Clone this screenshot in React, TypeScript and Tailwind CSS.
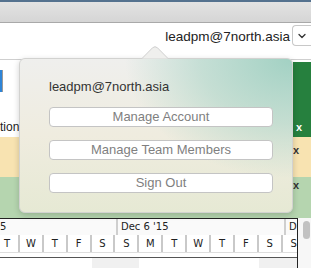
import React from 'react';

const days = ['T', 'W', 'T', 'F', 'S', 'S', 'M', 'T', 'W', 'T', 'F', 'S', 'S'];
// weekend columns get a light shading in the body rows
const weekend = [4, 5, 11, 12];

function Chevron() {
  return (
    <svg width="8" height="6" viewBox="0 0 8 6" fill="none">
      <path d="M1 1.5 L4 4.5 L7 1.5" stroke="#333" strokeWidth="1.3" strokeLinecap="round" strokeLinejoin="round" />
    </svg>
  );
}

function AccountPopover() {
  return (
    <div className="absolute left-[19px] top-[58px] w-[274px] h-[155px]">
      {/* arrow */}
      <svg className="absolute left-[123px] top-[-12px]" width="26" height="13" viewBox="0 0 26 13">
        <path d="M0 12.5 L10.5 1.8 Q13 -0.4 15.5 1.8 L26 12.5" fill="#efefed" stroke="#cfcfcf" strokeWidth="1" />
      </svg>
      <div className="h-full rounded-[6px] border border-[#d2d2d0] shadow-[0_2px_6px_rgba(0,0,0,0.18)] bg-[radial-gradient(ellipse_75%_95%_at_100%_0%,#a2d1c3_0%,rgba(170,212,198,0.6)_45%,rgba(200,225,210,0)_82%),linear-gradient(180deg,#efefed_0%,#efecdf_50%,#e6e9d4_100%)] pt-[20px] pl-[29px] pr-[19px] font-['Liberation_Sans',Arial,sans-serif]">
        <div className="text-[13px] leading-[16px] text-[#333]">leadpm@7north.asia</div>
        <div className="mt-[12px] flex flex-col gap-[13px]">
          {['Manage Account', 'Manage Team Members', 'Sign Out'].map((label) => (
            <button
              key={label}
              className="h-[20px] w-full rounded-[4px] border border-[#c4c4c4] bg-white text-[13px] leading-[18px] text-[#7f7f7f]"
            >
              {label}
            </button>
          ))}
        </div>
      </div>
    </div>
  );
}

export default function App() {
  return (
    <div className="relative w-[311px] h-[268px] overflow-hidden bg-white font-['Liberation_Sans',Arial,sans-serif]">
      {/* window title strip */}
      <div className="h-[2px] bg-[#55728f]" />
      <div className="h-[21px] bg-gradient-to-b from-[#e3e3e3] to-[#d5d5d5] border-b border-[#a9a9a9]" />

      {/* account bar */}
      <div className="h-[36px] flex items-start justify-end pt-[2px]">
        <span className="mt-[4px] mr-[2px] text-[13.5px] leading-[16px] text-[#222]">leadpm@7north.asia</span>
        <div className="w-[19px] h-[21px] rounded-l-[4px] border border-r-0 border-[#c8c8c8] bg-white flex items-center justify-center">
          <Chevron />
        </div>
      </div>

      {/* rows behind the popover */}
      <div className="h-[78px] flex border-t border-[#cfcfcf]">
        <div className="w-[19px] relative">
          <div className="mt-[10px] w-[3px] h-[22px] bg-[#2e84d6] border-r border-[#9a9a9a]" />
          <div className="absolute left-0 top-[60px] text-[12px] leading-[14px] text-[#222]">tion</div>
        </div>
        <div className="flex-1" />
        <div className="w-[18px] mt-[2px] bg-[#26803e] flex items-end pb-[4px] pl-[3px]">
          <span className="text-white text-[11px] font-bold leading-none">x</span>
        </div>
      </div>
      <div className="h-[40px] bg-[#f8e3b1] flex justify-end pr-[12px] pt-[8px]">
        <span className="text-[11px] font-bold leading-none text-[#333]">x</span>
      </div>
      <div className="h-[41px] bg-[#b5d5af] flex justify-end pr-[12px] pt-[3px]">
        <span className="text-[11px] font-bold leading-none text-[#333]">x</span>
      </div>

      {/* timeline */}
      <div className="flex">
        <div className="w-[298px] border-t border-r border-[#222] overflow-hidden font-['DejaVu_Sans',Verdana,sans-serif]">
          <div className="h-[16px] bg-[#fafafa] flex text-[10px] leading-[16px] text-[#222]">
            <div className="w-[116px]">5</div>
            <div className="w-[168px] border-l-2 border-[#cfcfcf] pl-[3px]">Dec 6 '15</div>
            <div className="flex-1 border-l-2 border-[#cfcfcf] pl-[3px]">D</div>
          </div>
          <div className="h-[17px] bg-white flex ml-[-4px] text-[10px] leading-[17px] text-[#222]">
            {days.map((d, i) => (
              <div key={i} className="w-[23.9px] shrink-0 text-center border-r-2 border-[#c9c9c9]">
                {d}
              </div>
            ))}
          </div>
          <div className="h-[1px] bg-[#dedede]" />
          <div className="h-[4px] bg-white" />
          <div className="h-[1px] bg-[#555]" />
          <div className="h-[10px] flex ml-[-4px]">
            {days.map((_, i) => (
              <div key={i} className={`w-[23.9px] shrink-0 ${weekend.includes(i) ? 'bg-[#f0f0f0]' : 'bg-white'}`} />
            ))}
          </div>
        </div>
        <div className="flex-1 bg-[#f7f7f7] pt-[3px] pl-[5px]">
          <div className="w-[7px] h-[18px] rounded-full bg-[#c2c2c2]" />
        </div>
      </div>

      <AccountPopover />
    </div>
  );
}
